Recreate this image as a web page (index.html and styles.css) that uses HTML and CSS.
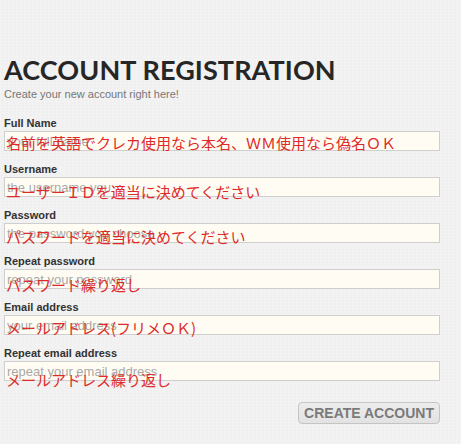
FILE: index.html
```html
<!DOCTYPE html>
<html lang="ja">
<head>
<meta charset="utf-8">
<title>Account Registration</title>
<link rel="stylesheet" href="styles.css">
</head>
<body>
<div class="page">
  <h1 class="title">ACCOUNT REGISTRATION</h1>
  <p class="subtitle">Create your new account right here!</p>
  <form class="form">
    <div class="field">
      <label class="label">Full Name</label>
      <div class="control">
        <input class="input" type="text" placeholder="your full name">
        <span class="note note-1">名前を英語でクレカ使用なら本名、ＷＭ使用なら偽名ＯＫ</span>
      </div>
    </div>
    <div class="field">
      <label class="label">Username</label>
      <div class="control">
        <input class="input" type="text" placeholder="the username you">
        <span class="note note-2">ユーザーＩＤを適当に決めてください</span>
      </div>
    </div>
    <div class="field">
      <label class="label">Password</label>
      <div class="control">
        <input class="input" type="text" placeholder="the password you choose">
        <span class="note note-3">パスワードを適当に決めてください</span>
      </div>
    </div>
    <div class="field">
      <label class="label">Repeat password</label>
      <div class="control">
        <input class="input" type="text" placeholder="repeat your password">
        <span class="note note-4">パスワード繰り返し</span>
      </div>
    </div>
    <div class="field">
      <label class="label">Email address</label>
      <div class="control">
        <input class="input" type="text" placeholder="your email address">
        <span class="note note-5">メールアドレス(フリメＯＫ)</span>
      </div>
    </div>
    <div class="field">
      <label class="label">Repeat email address</label>
      <div class="control">
        <input class="input" type="text" placeholder="repeat your email address">
        <span class="note note-6">メールアドレス繰り返し</span>
      </div>
    </div>
    <div class="actions">
      <button class="button" type="button">CREATE ACCOUNT</button>
    </div>
  </form>
</div>
</body>
</html>
```
FILE: styles.css
```css
html, body {
  margin: 0;
  padding: 0;
}
body {
  background-color: #f0f0f0;
  background-image:
    repeating-linear-gradient(90deg, rgba(255,255,255,0.18) 0 1px, transparent 1px 4px),
    repeating-linear-gradient(0deg, rgba(255,255,255,0.15) 0 1px, transparent 1px 3px);
  font-family: "Liberation Sans", Arial, sans-serif;
  color: #333;
  height: 444px;
  overflow: hidden;
}
.page {
  width: 436px;
  padding: 0 0 0 4px;
}
.title {
  margin: 0;
  padding-top: 52px;
  font-family: "Lato", "Liberation Sans", sans-serif;
  font-weight: 700;
  font-size: 27px;
  line-height: 35px;
  color: #262626;
  letter-spacing: 0.1px;
}
.subtitle {
  margin: 0;
  font-size: 11px;
  line-height: 14px;
  color: #777;
}
.form {
  margin-top: 15px;
}
.field {
  margin-bottom: 11px;
}
.label {
  display: block;
  font-size: 11px;
  line-height: 14px;
  font-weight: bold;
  color: #333;
  margin-bottom: 1px;
}
.control {
  position: relative;
}
.input {
  display: block;
  box-sizing: border-box;
  width: 436px;
  height: 20px;
  margin: 0;
  padding: 0 2px;
  border: 1px solid #cfcfcf;
  background: #fffdf3;
  font-family: "Liberation Sans", Arial, sans-serif;
  font-size: 13px;
  color: #333;
  outline: none;
}
.input::placeholder {
  color: #a9a9a9;
}
.note {
  position: absolute;
  left: 2px;
  font-family: "Noto Sans CJK JP", sans-serif;
  font-size: 15px;
  line-height: 15px;
  color: #e02a2a;
  white-space: nowrap;
  pointer-events: none;
}
.note-1 { top: 4px; }
.note-2 { top: 7px; }
.note-3 { top: 6px; }
.note-4 { top: 8px; }
.note-5 { top: 5px; }
.note-6 { top: 11px; }
.actions {
  display: flex;
  justify-content: flex-end;
  margin-top: 21px;
}
.button {
  box-sizing: border-box;
  height: 22px;
  padding: 0 5px;
  border: 1px solid #c4c4c4;
  border-radius: 4px;
  background: linear-gradient(#ececec, #e2e2e2);
  font-family: "Liberation Sans", Arial, sans-serif;
  font-weight: bold;
  font-size: 14px;
  line-height: 20px;
  color: #7a7a7a;
}
```
